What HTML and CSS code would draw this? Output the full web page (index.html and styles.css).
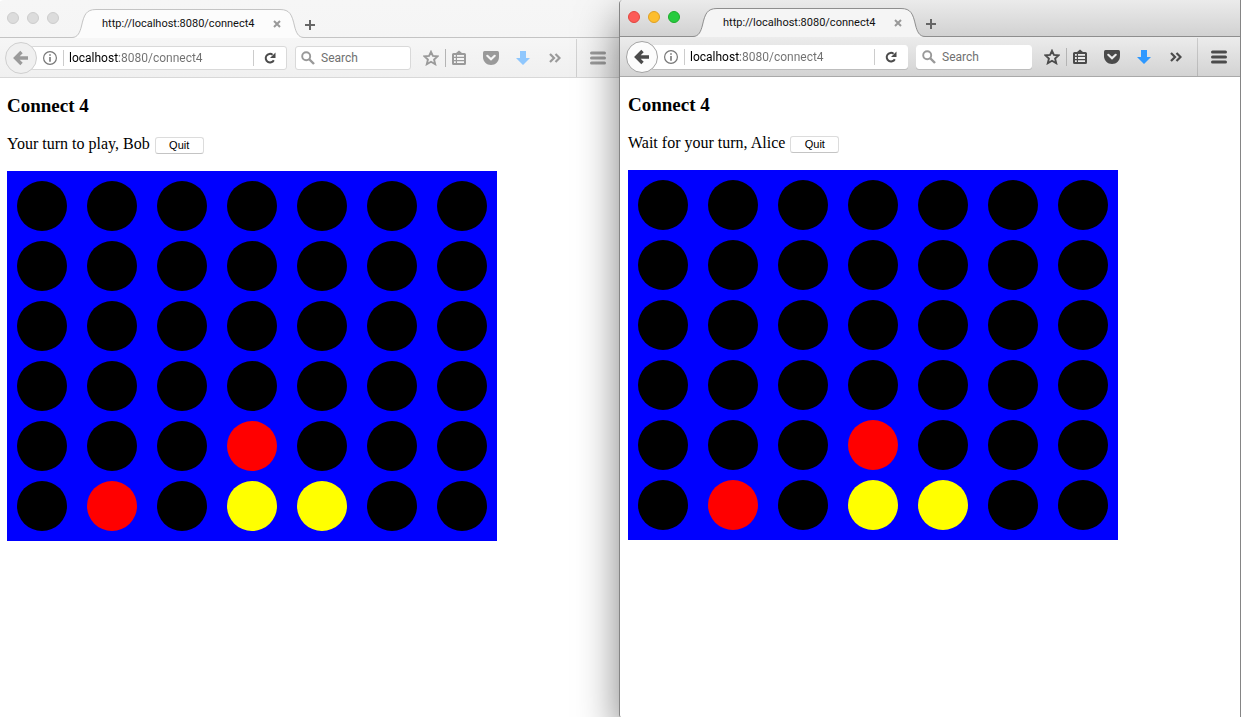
FILE: index.html
```html
<!DOCTYPE html>
<html lang="en">
<head>
<meta charset="utf-8">
<title>Connect 4</title>
<link rel="stylesheet" href="styles.css">
</head>
<body>
<svg class="sprite" aria-hidden="true">
  <symbol id="tab-shape" viewBox="0 0 232 29">
    <path class="tab-fill" d="M0 29V28.500C6 28.500 8 23 9.500 17C12 6 14 .5 24 .5H208C218 .5 220 6 222.500 17C224 23 226 28.500 232 28.500V29Z"/>
    <path class="tab-line" d="M0 28.500C6 28.500 8 23 9.500 17C12 6 14 .5 24 .5H208C218 .5 220 6 222.500 17C224 23 226 28.500 232 28.500"/>
  </symbol>
  <symbol id="close" viewBox="0 0 8 8"><path d="M1 1L7 7M7 1L1 7" fill="none" stroke="currentColor" stroke-width="2"/></symbol>
  <symbol id="plus" viewBox="0 0 10 10"><path d="M5 0V10M0 5H10" fill="none" stroke="currentColor" stroke-width="2"/></symbol>
  <symbol id="back" viewBox="0 0 16 16"><path d="M8.500 2L2.500 8L8.500 14M3 8H15" fill="none" stroke="currentColor" stroke-width="3.400"/></symbol>
  <symbol id="info" viewBox="0 0 14 14"><circle cx="7" cy="7" r="6.400" fill="none" stroke="currentColor" stroke-width="1.200"/><path d="M6.200 3.200H7.800V4.800H6.200ZM6.200 6H7.800V10.800H6.200Z" fill="currentColor"/></symbol>
  <symbol id="reload" viewBox="0 0 12 12"><path d="M9.800 8.200A4.300 4.300 0 1 1 8.600 2.700" fill="none" stroke="currentColor" stroke-width="2"/><path d="M11.500 .5V6H6Z" fill="currentColor"/></symbol>
  <symbol id="search" viewBox="0 0 14 14"><circle cx="5.200" cy="5.200" r="4" fill="none" stroke="currentColor" stroke-width="1.900"/><path d="M8 8L13 13" stroke="currentColor" stroke-width="2.400"/></symbol>
  <symbol id="star" viewBox="0 0 16 16"><path d="M8 1.800L9.900 5.900L14.400 6.400L11.100 9.600L12.200 14.200L8 11.800L3.800 14.200L4.900 9.600L1.600 6.400L6.100 5.900Z" fill="none" stroke="currentColor" stroke-width="1.900"/></symbol>
  <symbol id="list" viewBox="0 0 16 16"><path d="M1 4.500Q1 3 2.500 3H5L8 .6L11 3H13.500Q15 3 15 4.500V13.500Q15 15 13.500 15H2.500Q1 15 1 13.500Z" fill="currentColor"/><path class="list-rows" d="M3 5.800H4.800M6 5.800H13M3 9H4.800M6 9H13M3 12.200H4.800M6 12.200H13" stroke-width="1.800"/></symbol>
  <symbol id="pocket" viewBox="0 0 16 14"><path d="M1.500 0H14.500Q16 0 16 1.500V6C16 10.500 12.500 14 8 14S0 10.500 0 6V1.500Q0 0 1.500 0Z" fill="currentColor"/><path class="pocket-tick" d="M4.300 4.800L8 8.300L11.700 4.800" fill="none" stroke-width="2.200" stroke-linecap="round"/></symbol>
  <symbol id="download" viewBox="0 0 14 14"><path d="M4 0H10V7H14L7 14L0 7H4Z" fill="currentColor"/></symbol>
  <symbol id="more" viewBox="0 0 12 10"><path d="M1 1L5 5L1 9M6.500 1L10.500 5L6.500 9" fill="none" stroke="currentColor" stroke-width="2.200"/></symbol>
  <symbol id="menu" viewBox="0 0 16 14"><path d="M1.500 2H14.500M1.500 7H14.500M1.500 12H14.500" stroke="currentColor" stroke-width="3" stroke-linecap="round"/></symbol>
</svg>

<main class="desktop">
  <section class="window window-inactive" aria-label="Bob">
    <header class="titlebar">
      <div class="lights">
        <button class="light light-close" aria-label="Close window"></button>
        <button class="light light-min" aria-label="Minimize window"></button>
        <button class="light light-zoom" aria-label="Zoom window"></button>
      </div>
      <div class="tab">
        <svg class="tab-bg" aria-hidden="true"><use href="#tab-shape"/></svg>
        <span class="tab-title">http://localhost:8080/connect4</span>
        <button class="tab-close" aria-label="Close tab"><svg width="8" height="8"><use href="#close"/></svg></button>
      </div>
      <button class="new-tab" aria-label="New tab"><svg width="10" height="10"><use href="#plus"/></svg></button>
    </header>
    <nav class="toolbar">
      <button class="back" aria-label="Back"><svg width="16" height="16"><use href="#back"/></svg></button>
      <div class="address">
        <button class="info" aria-label="Site information"><svg width="14" height="14"><use href="#info"/></svg></button>
        <input class="url" type="text" aria-label="Address" value="localhost:8080/connect4">
        <button class="reload" aria-label="Reload"><svg width="12" height="12"><use href="#reload"/></svg></button>
      </div>
      <label class="search"><svg width="14" height="14" aria-hidden="true"><use href="#search"/></svg><input class="query" type="text" placeholder="Search" aria-label="Search"></label>
      <div class="tools">
        <button class="tool tool-star" aria-label="Bookmark"><svg width="16" height="16"><use href="#star"/></svg></button>
        <button class="tool tool-list" aria-label="Bookmarks list"><svg width="16" height="16"><use href="#list"/></svg></button>
        <button class="tool" aria-label="Pocket"><svg width="16" height="14"><use href="#pocket"/></svg></button>
        <button class="tool tool-download" aria-label="Downloads"><svg width="14" height="14"><use href="#download"/></svg></button>
        <button class="tool" aria-label="More tools"><svg width="12" height="10"><use href="#more"/></svg></button>
      </div>
      <button class="menu" aria-label="Menu"><svg width="16" height="14"><use href="#menu"/></svg></button>
    </nav>
    <div class="page">
      <h3 class="heading">Connect 4</h3>
      <div class="status"><span>Your turn to play, Bob</span><button class="quit">Quit</button></div>
      <div class="board">
        <i></i><i></i><i></i><i></i><i></i><i></i><i></i>
        <i></i><i></i><i></i><i></i><i></i><i></i><i></i>
        <i></i><i></i><i></i><i></i><i></i><i></i><i></i>
        <i></i><i></i><i></i><i></i><i></i><i></i><i></i>
        <i></i><i></i><i></i><i class="red"></i><i></i><i></i><i></i>
        <i></i><i class="red"></i><i></i><i class="yellow"></i><i class="yellow"></i><i></i><i></i>
      </div>
    </div>
  </section>

  <section class="window window-active" aria-label="Alice">
    <header class="titlebar">
      <div class="lights">
        <button class="light light-close" aria-label="Close window"></button>
        <button class="light light-min" aria-label="Minimize window"></button>
        <button class="light light-zoom" aria-label="Zoom window"></button>
      </div>
      <div class="tab">
        <svg class="tab-bg" aria-hidden="true"><use href="#tab-shape"/></svg>
        <span class="tab-title">http://localhost:8080/connect4</span>
        <button class="tab-close" aria-label="Close tab"><svg width="8" height="8"><use href="#close"/></svg></button>
      </div>
      <button class="new-tab" aria-label="New tab"><svg width="10" height="10"><use href="#plus"/></svg></button>
    </header>
    <nav class="toolbar">
      <button class="back" aria-label="Back"><svg width="16" height="16"><use href="#back"/></svg></button>
      <div class="address">
        <button class="info" aria-label="Site information"><svg width="14" height="14"><use href="#info"/></svg></button>
        <input class="url" type="text" aria-label="Address" value="localhost:8080/connect4">
        <button class="reload" aria-label="Reload"><svg width="12" height="12"><use href="#reload"/></svg></button>
      </div>
      <label class="search"><svg width="14" height="14" aria-hidden="true"><use href="#search"/></svg><input class="query" type="text" placeholder="Search" aria-label="Search"></label>
      <div class="tools">
        <button class="tool tool-star" aria-label="Bookmark"><svg width="16" height="16"><use href="#star"/></svg></button>
        <button class="tool tool-list" aria-label="Bookmarks list"><svg width="16" height="16"><use href="#list"/></svg></button>
        <button class="tool" aria-label="Pocket"><svg width="16" height="14"><use href="#pocket"/></svg></button>
        <button class="tool tool-download" aria-label="Downloads"><svg width="14" height="14"><use href="#download"/></svg></button>
        <button class="tool" aria-label="More tools"><svg width="12" height="10"><use href="#more"/></svg></button>
      </div>
      <button class="menu" aria-label="Menu"><svg width="16" height="14"><use href="#menu"/></svg></button>
    </nav>
    <div class="page">
      <h3 class="heading">Connect 4</h3>
      <div class="status"><span>Wait for your turn, Alice</span><button class="quit">Quit</button></div>
      <div class="board">
        <i></i><i></i><i></i><i></i><i></i><i></i><i></i>
        <i></i><i></i><i></i><i></i><i></i><i></i><i></i>
        <i></i><i></i><i></i><i></i><i></i><i></i><i></i>
        <i></i><i></i><i></i><i></i><i></i><i></i><i></i>
        <i></i><i></i><i></i><i class="red"></i><i></i><i></i><i></i>
        <i></i><i class="red"></i><i></i><i class="yellow"></i><i class="yellow"></i><i></i><i></i>
      </div>
    </div>
  </section>
</main>
</body>
</html>
```

FILE: styles.css
```css
* { box-sizing: border-box; }
body { margin: 0; background: #fff; }
svg { display: block; flex: none; }
.sprite { position: absolute; width: 0; height: 0; }
button {
  margin: 0; padding: 0; border: 0; background: none; color: inherit;
  display: flex; align-items: center; justify-content: center; flex: none;
}
input {
  margin: 0; padding: 0; border: 0; outline: 0; background: none; min-width: 0;
  font-family: Roboto, "Liberation Sans", sans-serif;
}

.desktop {
  display: grid;
  grid-template-columns: 619fr 622fr;
  min-height: 100vh;
}
.window {
  display: flex; flex-direction: column; min-width: 0;
  background: #fff;
  font-family: Roboto, "Liberation Sans", sans-serif;
}
.window-inactive {
  --edge: 7px; --bar-height: 38px;
  --title-top: #f6f6f6; --title-bottom: #f5f5f5; --title-line: #c4c4c4;
  --tool-top: #f6f6f6; --tool-bottom: #f0f0f0; --tool-line: #d8d8d8;
  --tab-top: #fcfcfc;
  --icon: #9a9a9a; --download: #8fc7fd;
  --field-line: #d9d9d9; --back-bg: #f0f0f0; --back-line: #cfcfcf;
}
.window-active {
  --edge: 8px; --bar-height: 37px;
  --title-top: #ebebeb; --title-bottom: #d1d1d1; --title-line: #8e8e8e;
  --tool-top: #ececec; --tool-bottom: #d3d3d3; --tool-line: #a9a9a9;
  --tab-top: #f5f5f5;
  --icon: #4b4b4b; --download: #2e98ff;
  --field-line: #fff; --back-bg: #fcfcfc; --back-line: #a3a3a3;
  position: relative; z-index: 1;
  border: solid #858585; border-width: 0 1px;
  border-radius: 4px 0 0 2px;
  box-shadow: 0 18px 42px rgba(0, 0, 0, .5);
}

.titlebar {
  display: flex; height: var(--bar-height); padding-left: var(--edge);
  border-radius: 4px 0 0 0;
  background: linear-gradient(var(--title-top), var(--title-bottom));
  box-shadow: inset 0 -1px var(--title-line);
}
.lights { display: flex; gap: 8px; align-items: center; height: 36px; width: 65px; }
.window-active .lights { height: 34px; }
.light { width: 12px; height: 12px; border-radius: 50%; background: #dcdcdc; border: 1px solid #cdcdcd; }
.window-active .light-close { background: #fc5b57; border-color: #e2463f; }
.window-active .light-min { background: #fdbe2e; border-color: #dfa023; }
.window-active .light-zoom { background: #27cb3f; border-color: #1dac2b; }

.tab {
  position: relative; align-self: flex-end; display: flex; align-items: center;
  width: 232px; height: 29px; padding-left: 30px;
}
.tab-bg { position: absolute; inset: 0; width: 232px; height: 29px; }
.tab-fill { fill: var(--tab-top); }
.tab-line { fill: none; stroke: var(--title-line); }
.tab-title { position: relative; width: 171px; font-size: 11px; line-height: 14px; color: #111; white-space: nowrap; }
.tab-close { position: relative; color: #999; }
.new-tab { align-self: flex-end; height: 27px; margin-left: 1px; color: #666; }

.toolbar {
  display: flex; align-items: center; height: 40px;
  padding-top: 1px;
  padding-left: calc(var(--edge) - 2px);
  background: linear-gradient(var(--tool-top), var(--tool-bottom));
  border-bottom: 1px solid var(--tool-line);
  color: var(--icon);
}
.back {
  position: relative; z-index: 1; width: 32px; height: 32px; border-radius: 50%;
  background: var(--back-bg); border: 1px solid var(--back-line);
}
.address, .search {
  display: flex; align-items: center; height: 24px; background: #fff;
  border: 1px solid var(--field-line); border-radius: 3px;
}
.window-active .address, .window-active .search { box-shadow: 0 1px #bdbdbd; }
.address { flex: 1; min-width: 0; margin-left: -7px; padding-left: 12px; }
.info { width: 21px; height: 16px; justify-content: flex-start; color: #777; border-right: 1px solid #ccc; }
.url {
  flex: 1; height: 16px; padding-left: 5px; font-size: 12px;
  color: transparent; caret-color: #000;
  background: linear-gradient(90deg, #000 55px, #707070 55px);
  background-clip: text; -webkit-background-clip: text;
}
.reload { width: 33px; height: 16px; border-left: 1px solid #ccc; color: #4b4b4b; }
.search { width: 116px; margin: 0 6px 0 8px; padding-left: 5px; gap: 6px; color: #999; }
.query { flex: 1; height: 16px; font-size: 12px; color: #000; }
.query::placeholder { color: #707070; opacity: 1; }

.tools { display: flex; align-items: center; padding-right: 5px; }
.tool { width: 32px; height: 18px; }
.tool-star { width: 29px; border-right: 1px solid #b4b4b4; }
.tool-list { width: 26px; margin-right: 3px; }
.tool-download { color: var(--download); }
.list-rows { stroke: var(--tool-top); }
.pocket-tick { stroke: var(--tool-top); }
.menu { width: 43px; height: 38px; border-left: 1px solid #0002; }

.page { padding: 17px 8px 17px var(--edge); font-family: "Liberation Serif", "Times New Roman", serif; color: #000; }
.heading { margin: 0 0 17px; font-size: 19px; line-height: 22px; }
.status { display: flex; align-items: flex-end; gap: 5px; margin-bottom: 17px; font-size: 16px; line-height: 20px; }
.quit {
  width: 49px; height: 17px; background: #fff;
  border: 1px solid #dcdcdc; border-bottom-color: #c4c4c4; border-radius: 3px;
  font-family: "Liberation Sans", Arial, sans-serif; font-size: 11px; line-height: 13px; color: #000;
}
.board {
  display: inline-grid; grid-template-columns: repeat(7, 50px); grid-auto-rows: 50px;
  gap: 10px 20px; padding: 10px; background: #00f; vertical-align: top;
}
.board i { border-radius: 50%; background: #000; }
.board .red { background: #f00; }
.board .yellow { background: #ff0; }
```
